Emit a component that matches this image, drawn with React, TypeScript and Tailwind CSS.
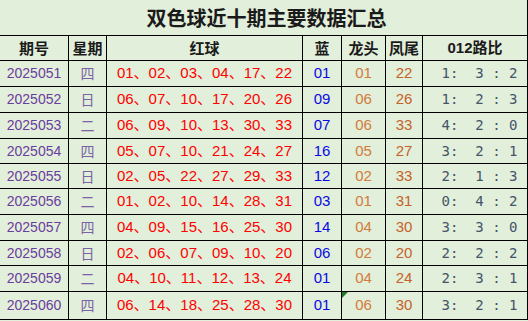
import React from "react";

const rows = [
  ["2025051", "四", "01、02、03、04、17、22", "01", "01", "22", ["1", "3", "2"]],
  ["2025052", "日", "06、07、10、17、20、26", "09", "06", "26", ["1", "2", "3"]],
  ["2025053", "二", "06、09、10、13、30、33", "07", "06", "33", ["4", "2", "0"]],
  ["2025054", "四", "05、07、10、21、24、27", "16", "05", "27", ["3", "2", "1"]],
  ["2025055", "日", "02、05、22、27、29、33", "12", "02", "33", ["2", "1", "3"]],
  ["2025056", "二", "01、02、10、14、28、31", "03", "01", "31", ["0", "4", "2"]],
  ["2025057", "四", "04、09、15、16、25、30", "14", "04", "30", ["3", "3", "0"]],
  ["2025058", "日", "02、06、07、09、10、20", "06", "02", "20", ["2", "2", "2"]],
  ["2025059", "二", "04、10、11、12、13、24", "01", "04", "24", ["2", "3", "1"]],
  ["2025060", "四", "06、14、18、25、28、30", "01", "06", "30", ["3", "2", "1"]],
] as const;

const rowH = ["h-[25px]", "h-[25px]", "h-[25px]", "h-[24px]", "h-[24px]", "h-[25px]", "h-[25px]", "h-[24px]", "h-[25px]", "h-[27px]"];

const cell = "bg-[#e2efda] flex items-center justify-center";
const cjk = "font-['Noto_Sans_CJK_SC',sans-serif]";
const num = "font-['Liberation_Sans','Noto_Sans_CJK_SC',sans-serif]";

export default function App() {
  return (
    <div className="w-[528px] h-[321px] bg-[#e2efda] overflow-hidden">
      <div className="grid grid-cols-[68px_37px_195px_38px_43px_36px_104px] gap-px bg-black pr-px pb-px w-[528px]">
        <div className={`${cell} col-span-7 h-[35px] ${cjk} text-[20px] font-bold text-[#1a1a1a] pl-[6px]`}>
          双色球近十期主要数据汇总
        </div>
        {["期号", "星期", "红球", "蓝", "龙头", "凤尾"].map((h) => (
          <div key={h} className={`${cell} h-[24px] ${cjk} text-[15px] font-bold text-[#1a1a1a]`}>
            {h}
          </div>
        ))}
        <div className={`${cell} h-[24px] ${num} text-[15px] font-bold text-[#1a1a1a]`}>012路比</div>
        {rows.map((r, i) => (
          <React.Fragment key={r[0]}>
            <div className={`${cell} ${rowH[i]} ${num} text-[14px] text-[#6a3d9e]`}>{r[0]}</div>
            <div className={`${cell} ${rowH[i]} ${cjk} text-[14px] text-[#7b62a6]`}>{r[1]}</div>
            <div className={`${cell} ${rowH[i]} ${num} text-[15px] text-[#ff0000]`}>{r[2]}</div>
            <div className={`${cell} ${rowH[i]} ${num} text-[15px] text-[#0a0ae6]`}>{r[3]}</div>
            <div className={`${cell} ${rowH[i]} ${num} text-[15px] text-[#d27b3a] relative`}>
              {i === 9 && (
                <svg className="absolute left-0 top-0" width="6" height="6" viewBox="0 0 6 6">
                  <polygon points="0,0 6,0 0,6" fill="#1f7a1f" />
                </svg>
              )}
              {r[4]}
            </div>
            <div className={`${cell} ${rowH[i]} ${num} text-[15px] text-[#c5622a]`}>{r[5]}</div>
            <div className={`${cell} ${rowH[i]} font-['DejaVu_Sans_Mono',monospace] text-[14px] text-[#44546a] whitespace-pre pl-[9px]`}>
              {`${r[6][0]}:  ${r[6][1]} : ${r[6][2]}`}
            </div>
          </React.Fragment>
        ))}
      </div>
    </div>
  );
}
